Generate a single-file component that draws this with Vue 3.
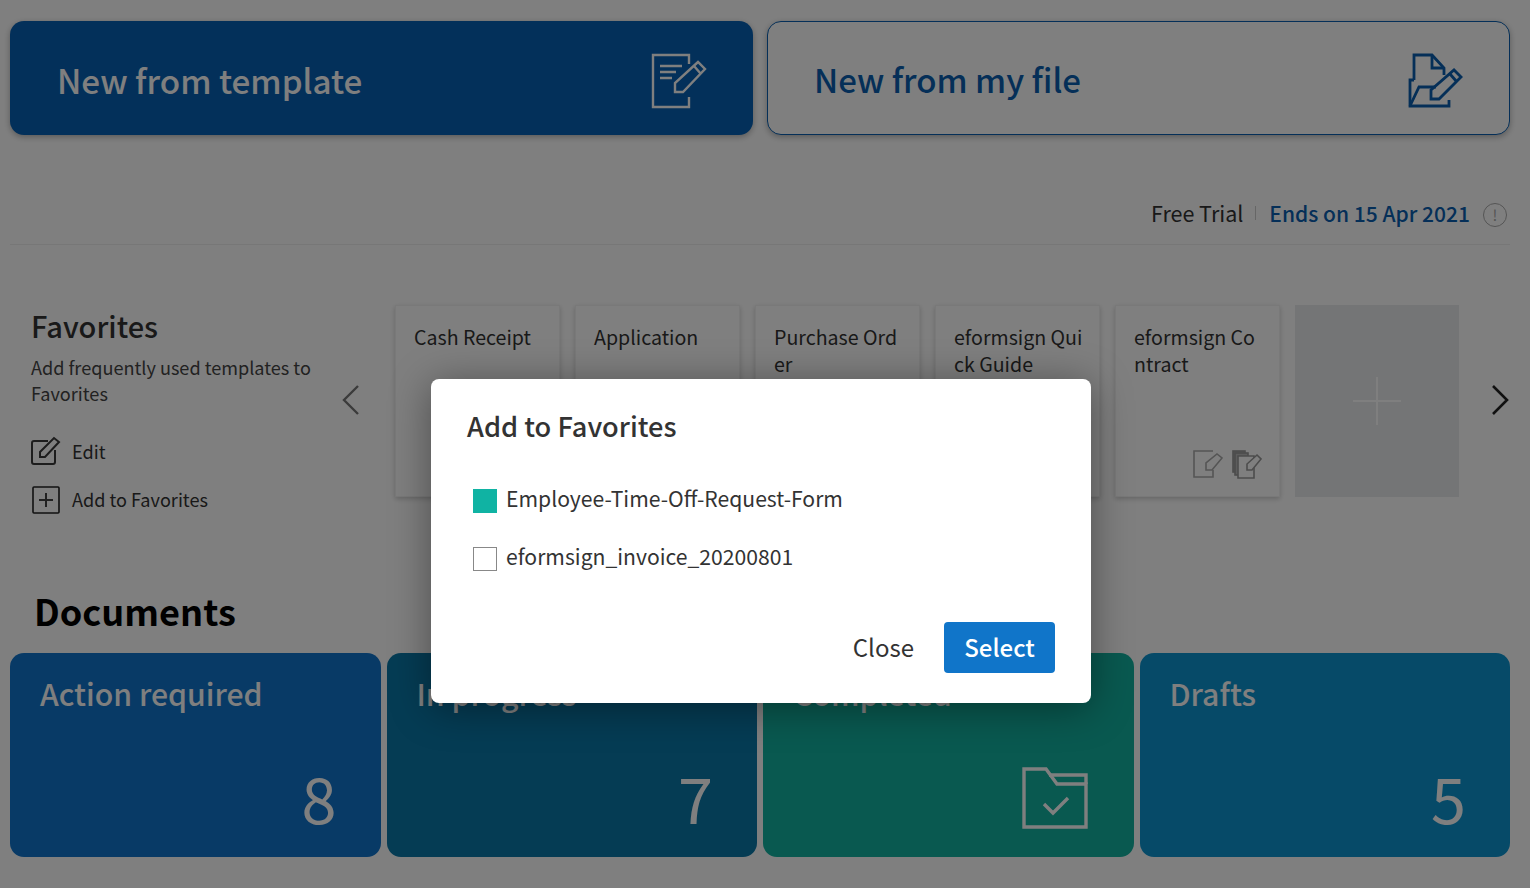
<script setup>
import { ref } from 'vue'

const favorites = ['Cash Receipt', 'Application', 'Purchase Ord\ner', 'eformsign Qui\nck Guide', 'eformsign Co\nntract']
const tiles = [
  { title: 'Action required', count: '8', cls: 'blue' },
  { title: 'In progress', count: '7', cls: 'teal' },
  { title: 'Completed', count: '', cls: 'green' },
  { title: 'Drafts', count: '5', cls: 'cyan' }
]
const templates = ref([
  { name: 'Employee-Time-Off-Request-Form', checked: true },
  { name: 'eformsign_invoice_20200801', checked: false }
])
</script>

<template>
  <div class="page">
    <div class="new-row">
      <div class="new-btn solid">
        <span>New from template</span>
        <svg class="new-icon first" width="56" height="56" viewBox="0 0 56 56" fill="none" stroke="currentColor" stroke-width="2.4">
          <path d="M38 11V2H2v52h36V44" />
          <path d="M9 13h22M9 19h16M9 25h12" />
          <path d="M24 39v-9L47 9l7 7-22 23z" />
          <path d="M43 13l7 8" />
        </svg>
      </div>
      <div class="new-btn outline">
        <span>New from my file</span>
        <svg class="new-icon second" width="56" height="56" viewBox="0 0 56 56" fill="none" stroke="currentColor" stroke-width="2.8">
          <path d="M7 28V3h18l12 13v7" />
          <path d="M25 3v13h12" />
          <path d="M7 28H3v26h39v-6" />
          <path d="M3 54l9-19h17" />
          <path d="M24 47v-9l23-20 7 7-22 22z" />
          <path d="M43 22l7 8" />
        </svg>
      </div>
    </div>

    <div class="trial-row">
      <span class="trial-label">Free Trial</span>
      <i class="trial-sep"></i>
      <span class="trial-date">Ends on 15 Apr 2021</span>
      <span class="trial-info">!</span>
    </div>

    <div class="fav-row">
      <div class="fav-side">
        <h2>Favorites</h2>
        <p>Add frequently used templates to Favorites</p>
        <div class="fav-action">
          <svg width="30" height="30" viewBox="0 0 30 30" fill="none" stroke="#3a3a3a" stroke-width="2">
            <path d="M17 5H3a2 2 0 0 0-2 2v19a2 2 0 0 0 2 2h19a2 2 0 0 0 2-2V14" />
            <path d="M9 21v-5L23 2l5 4-14 15z" />
          </svg>
          <span>Edit</span>
        </div>
        <div class="fav-action">
          <svg width="30" height="30" viewBox="0 0 30 30" fill="none" stroke="#222" stroke-width="1.6">
            <rect x="2" y="3" width="26" height="26" rx="1" />
            <path d="M8 16h14M15 9v14" stroke-width="2" stroke="#444" />
          </svg>
          <span>Add to Favorites</span>
        </div>
      </div>

      <svg class="arrow prev" width="20" height="32" viewBox="0 0 20 32" fill="none" stroke="#777" stroke-width="2.4">
        <path d="M17 2L3 16l14 14" />
      </svg>

      <div class="cards">
        <div v-for="(name, i) in favorites" :key="i" class="card">
          <div class="card-name">{{ name }}</div>
          <div class="card-icons">
            <svg width="30" height="30" viewBox="0 0 30 30" fill="none" stroke="#aaa" stroke-width="1.6">
              <path d="M20 1H1v26h19v-7" />
              <path d="M13 20v-7L24 4l5 4-10 12z" />
            </svg>
            <svg width="30" height="30" viewBox="0 0 30 30" fill="none" stroke="#999" stroke-width="1.6">
              <rect x="1" y="1" width="12" height="21" fill="#aaa" />
              <rect x="3" y="3" width="13" height="22" fill="#bbb" />
              <path d="M6 6h16v22H6z" fill="#fff" />
              <path d="M15 20v-6l10-9 4 4-9 11z" fill="#fff" />
            </svg>
          </div>
        </div>
        <div class="add-card">
          <svg width="48" height="48" viewBox="0 0 48 48" stroke="#fff" stroke-width="2">
            <path d="M0 24h48M24 0v48" />
          </svg>
        </div>
      </div>

      <svg class="arrow next" width="20" height="32" viewBox="0 0 20 32" fill="none" stroke="#222" stroke-width="2.6">
        <path d="M3 2l14 14L3 30" />
      </svg>
    </div>

    <h1 class="docs-title">Documents</h1>
    <div class="tiles">
      <div v-for="t in tiles" :key="t.title" class="tile" :class="t.cls">
        <div class="tile-title">{{ t.title }}</div>
        <div class="tile-count">
          <template v-if="t.count">{{ t.count }}</template>
          <svg v-else class="folder" width="66" height="62" viewBox="0 0 66 62" fill="none" stroke="#fff" stroke-width="3.4">
            <path d="M2 2h22l11 15h29v43H2z" />
            <path d="M27 8h37v9" />
            <path d="M22 37l9 9 15-15" />
          </svg>
        </div>
      </div>
    </div>

    <div class="overlay">
      <div class="modal">
        <h3>Add to Favorites</h3>
        <label v-for="t in templates" :key="t.name" class="check-row">
          <i class="box" :class="{ on: t.checked }"></i>
          <span>{{ t.name }}</span>
        </label>
        <div class="modal-foot">
          <button class="close-btn">Close</button>
          <button class="select-btn">Select</button>
        </div>
      </div>
    </div>
  </div>
</template>

<style>
html, body {
  margin: 0;
  background: #fff;
  overflow: hidden;
}
</style>

<style scoped>
.page {
  position: relative;
  height: 888px;
  box-sizing: border-box;
  padding: 21px 20px 0 10px;
  font-family: "Noto Sans CJK KR", "Noto Sans", sans-serif;
  color: #333;
  overflow: hidden;
}

.new-row {
  display: grid;
  grid-template-columns: 1fr 1fr;
  gap: 14px;
}
.new-btn {
  height: 114px;
  box-sizing: border-box;
  display: flex;
  align-items: center;
  justify-content: space-between;
  padding: 2px 46px 0 47px;
  border-radius: 14px;
  font-size: 33px;
  font-weight: 500;
  box-shadow: 0 2px 6px rgba(0, 0, 0, .3);
}
.new-btn.solid {
  font-size: 33.2px;
  background: #0660b4;
  color: #fff;
}
.new-btn.outline {
  padding-left: 46px;
  background: #fff;
  border: 1px solid #0a5fb0;
  color: #0a5fb0;
}
.new-icon.first {
  margin-top: 4px;
}
.new-icon.second {
  margin-top: 2px;
}

.trial-row {
  height: 110px;
  box-sizing: border-box;
  padding: 0 3px 16px 0;
  display: flex;
  align-items: flex-end;
  justify-content: flex-end;
  border-bottom: 1px solid #eee;
  line-height: 30px;
}
.trial-label {
  color: #333;
  font-size: 21.5px;
}
.trial-sep {
  width: 1px;
  height: 14px;
  background: #ccc;
  margin: 0 13px 8px 12px;
}
.trial-date {
  color: #0a5fb0;
  font-size: 21px;
  font-weight: 500;
}
.trial-info {
  width: 22px;
  height: 22px;
  margin: 0 0 1px 13px;
  border: 1px solid #aaa;
  border-radius: 50%;
  color: #aaa;
  font-size: 15px;
  line-height: 22px;
  text-align: center;
}

.fav-row {
  display: flex;
  align-items: flex-start;
  margin-top: 60px;
  height: 192px;
}
.fav-side {
  width: 310px;
  padding: 0 0 0 21px;
  flex-shrink: 0;
}
.fav-side h2 {
  margin: 0 0 8px;
  font-size: 29px;
  font-weight: 500;
  line-height: 41px;
}
.fav-side p {
  margin: 0 0 30px;
  font-size: 18.1px;
  line-height: 26px;
  color: #444;
}
.fav-action {
  display: flex;
  align-items: center;
  gap: 11px;
  height: 30px;
  margin-bottom: 18px;
  font-size: 18.1px;
  color: #333;
}
.arrow {
  flex-shrink: 0;
  margin-top: 79px;
}
.arrow.next {
  margin-left: 31px;
}

.cards {
  display: flex;
  margin-left: 34px;
  gap: 15px;
}
.card {
  width: 165px;
  height: 192px;
  box-sizing: border-box;
  padding: 17px 8px 0 18px;
  position: relative;
  border: 1px solid #f2f2f2;
  box-shadow: 0 2px 5px rgba(0, 0, 0, .2);
  background: #fff;
}
.card-name {
  font-size: 19.6px;
  line-height: 27px;
  white-space: pre;
  color: #333;
}
.card-icons {
  position: absolute;
  right: 17px;
  bottom: 16px;
  display: flex;
  gap: 9px;
}
.add-card {
  width: 164px;
  height: 192px;
  background: #e8eaed;
  display: flex;
  align-items: center;
  justify-content: center;
}

.docs-title {
  margin: 86px 0 0 24px;
  font-size: 36.1px;
  font-weight: 700;
  line-height: 54px;
  color: #000;
}
.tiles {
  display: grid;
  grid-template-columns: repeat(4, 1fr);
  gap: 6px;
  margin-top: 16px;
}
.tile {
  height: 204px;
  box-sizing: border-box;
  padding: 17px 30px 20px;
  border-radius: 14px;
  color: #fff;
  display: flex;
  flex-direction: column;
  justify-content: space-between;
}
.tile.blue {
  background: #1074cc;
}
.tile.teal {
  background: #0a78a8;
}
.tile.green {
  background: #12b2a0;
}
.tile.cyan {
  background: #0c94d0;
}
.tile-title {
  font-size: 30.2px;
  font-weight: 500;
  line-height: 46px;
}
.tile-count {
  text-align: right;
  padding-right: 14px;
  font-size: 63px;
  line-height: 80px;
  height: 80px;
}
.folder {
  display: block;
  margin: 10px 2px 0 auto;
}

.overlay {
  position: absolute;
  inset: 0;
  padding-right: 8px;
  background: rgba(0, 0, 0, .5);
  display: flex;
  align-items: flex-start;
  justify-content: center;
}
.modal {
  width: 660px;
  height: 324px;
  margin-top: 379px;
  box-sizing: border-box;
  padding: 25px 36px 30px;
  border-radius: 8px;
  background: #fff;
  box-shadow: 0 5px 40px rgba(0, 0, 0, .4);
}
.modal h3 {
  margin: 0 0 35px;
  font-size: 27.2px;
  font-weight: 500;
  line-height: 42px;
  color: #333;
}
.check-row {
  display: flex;
  align-items: flex-start;
  gap: 9px;
  padding-left: 6px;
  height: 34px;
  margin-bottom: 24px;
  font-size: 21.15px;
  line-height: 34px;
  color: #333;
}
.box {
  width: 24px;
  height: 24px;
  margin-top: 8px;
  box-sizing: border-box;
  border: 1px solid #888;
  background: #fff;
}
.box.on {
  border: 0;
  background: #10b3a3;
}
.modal-foot {
  display: flex;
  justify-content: flex-end;
  gap: 30px;
  margin-top: 49px;
}
.modal-foot button {
  font-family: inherit;
  font-size: 24px;
  height: 51px;
  padding-bottom: 3px;
  border: 0;
  border-radius: 4px;
  cursor: pointer;
}
.close-btn {
  background: none;
  color: #333;
  padding-left: 0;
  padding-right: 0;
}
.select-btn {
  width: 111px;
  background: #1075c9;
  color: #fff;
  font-weight: 500;
}
</style>
